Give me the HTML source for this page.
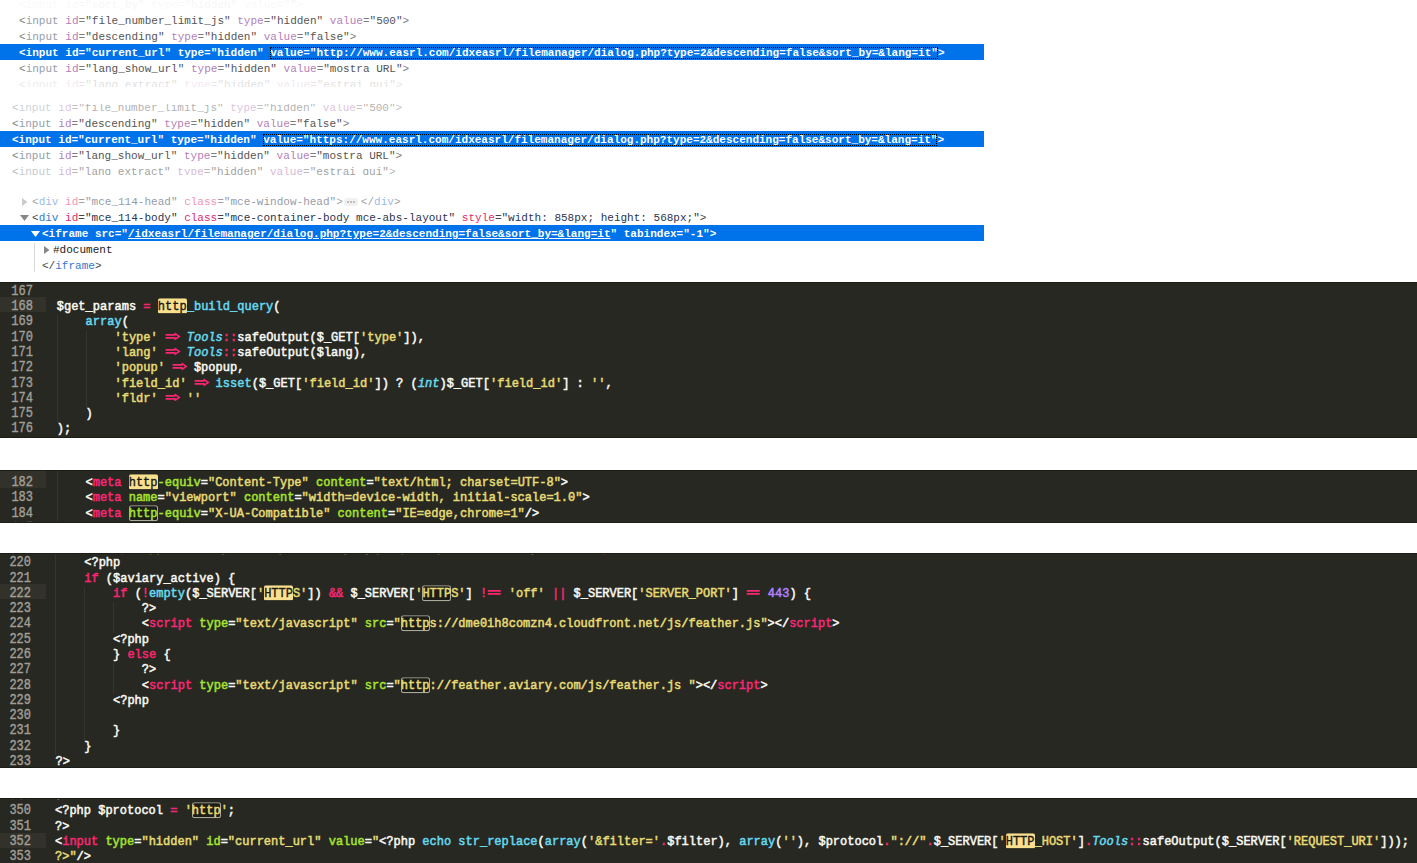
<!DOCTYPE html>
<html><head><meta charset="utf-8"><style>
*{margin:0;padding:0;box-sizing:border-box}
html,body{width:1417px;height:863px;overflow:hidden;background:#fff}
body{position:relative;font-family:"Liberation Mono",monospace}
.sb{position:absolute;left:0;width:1417px;background:#272822;overflow:hidden}
.sb::after{content:'';position:absolute;left:0;top:0;right:0;bottom:0;box-shadow:inset 0 1px 0 #1d1d18,inset 0 -1px 0 #1d1d18;pointer-events:none}
.ln{position:absolute;left:9px;width:24px;text-align:right;color:#a09f97;line-height:15.28px;height:15.28px;white-space:pre;transform:scaleY(1.16);transform-origin:0 11px;-webkit-text-stroke:0.35px #a09f97}
.cl{position:absolute;color:#f8f8f2;line-height:15.28px;height:15.28px;white-space:pre;transform:scaleY(1.06);transform-origin:0 11px;-webkit-text-stroke:0.5px currentColor}
.gh{position:absolute;left:0;width:46px;height:15px;background:#32322b}
.ig{position:absolute;width:1px;background:#34352e}
.p{color:#f92672}.y{color:#e6db74}.c{color:#66d9ef}.ci{color:#66d9ef;font-style:italic}.g{color:#a6e22e}.v{color:#ae81ff}
.hl{background:linear-gradient(#f9e08f,#f9e08f) 0 0/100% calc(100% - 1px) no-repeat;padding-top:1px;color:#1a1a14;border-radius:2px;-webkit-text-stroke:0.35px #1a1a14}
.ol{background:linear-gradient(#1d1d18,#1d1d18) 0 0/100% calc(100% - 1px) no-repeat;padding-top:1px;box-shadow:inset 0 0 0 1px #aaa99c;border-radius:2.5px}
.dt{position:absolute;left:0;width:1417px;overflow:hidden}
.dr{position:absolute;left:0;width:1417px;height:16px;line-height:18px;font-size:11.03px;white-space:pre;color:#555}
.sel{background:#0073ea;width:984px;color:#fff}
.sel span{color:#fff!important}
.ta{color:#93a0ab}.pa{color:#7c7c7c}.aa{color:#b47fb8}.va{color:#555}
.tc{color:#3478d0}.pc{color:#444}.ac{color:#dd2a6c}.vc{color:#2b3550}
.dot{outline:1px dotted #000;outline-offset:-1px}
.u{text-decoration:underline}
.arr{display:inline-block;vertical-align:top;overflow:visible}
</style></head>
<body>
<div class="dt" style="top:0px;height:87px">
<div class="dr " style="top:-4px;opacity:0.05"><span style="position:absolute;left:19px"><span class="pa">&lt;</span><span class="ta">input</span> <span class="aa">id</span><span class="pa">=</span><span class="va">&quot;sort_by&quot;</span> <span class="aa">type</span><span class="pa">=</span><span class="va">&quot;hidden&quot;</span> <span class="aa">value</span><span class="pa">=</span><span class="va">&quot;&quot;</span><span class="pa">&gt;</span></span></div>
<div class="dr " style="top:12px;opacity:1"><span style="position:absolute;left:19px"><span class="pa">&lt;</span><span class="ta">input</span> <span class="aa">id</span><span class="pa">=</span><span class="va">&quot;file_number_limit_js&quot;</span> <span class="aa">type</span><span class="pa">=</span><span class="va">&quot;hidden&quot;</span> <span class="aa">value</span><span class="pa">=</span><span class="va">&quot;500&quot;</span><span class="pa">&gt;</span></span></div>
<div class="dr " style="top:28px;opacity:1"><span style="position:absolute;left:19px"><span class="pa">&lt;</span><span class="ta">input</span> <span class="aa">id</span><span class="pa">=</span><span class="va">&quot;descending&quot;</span> <span class="aa">type</span><span class="pa">=</span><span class="va">&quot;hidden&quot;</span> <span class="aa">value</span><span class="pa">=</span><span class="va">&quot;false&quot;</span><span class="pa">&gt;</span></span></div>
<div class="dr sel" style="top:44px"><span style="position:absolute;left:19px;font-weight:bold">&lt;input id=&quot;current_url&quot; type=&quot;hidden&quot; <span class="dot">value=&quot;http://www.easrl.com/idxeasrl/filemanager/dialog.php?type=2&amp;descending=false&amp;sort_by=&amp;lang=it&quot;</span>&gt;</span></div>
<div class="dr " style="top:60px;opacity:1"><span style="position:absolute;left:19px"><span class="pa">&lt;</span><span class="ta">input</span> <span class="aa">id</span><span class="pa">=</span><span class="va">&quot;lang_show_url&quot;</span> <span class="aa">type</span><span class="pa">=</span><span class="va">&quot;hidden&quot;</span> <span class="aa">value</span><span class="pa">=</span><span class="va">&quot;mostra URL&quot;</span><span class="pa">&gt;</span></span></div>
<div class="dr " style="top:76px;opacity:0.18"><span style="position:absolute;left:19px"><span class="pa">&lt;</span><span class="ta">input</span> <span class="aa">id</span><span class="pa">=</span><span class="va">&quot;lang_extract&quot;</span> <span class="aa">type</span><span class="pa">=</span><span class="va">&quot;hidden&quot;</span> <span class="aa">value</span><span class="pa">=</span><span class="va">&quot;estrai qui&quot;</span><span class="pa">&gt;</span></span></div>
</div>
<div class="dt" style="top:103.5px;height:71.5px">
<div class="dr " style="top:-20.5px;opacity:0"><span style="position:absolute;left:12px"><span class="pa">&lt;</span><span class="ta">input</span> <span class="aa">id</span><span class="pa">=</span><span class="va">&quot;sort_by&quot;</span> <span class="aa">type</span><span class="pa">=</span><span class="va">&quot;hidden&quot;</span> <span class="aa">value</span><span class="pa">=</span><span class="va">&quot;&quot;</span><span class="pa">&gt;</span></span></div>
<div class="dr " style="top:-4.5px;opacity:0.45"><span style="position:absolute;left:12px"><span class="pa">&lt;</span><span class="ta">input</span> <span class="aa">id</span><span class="pa">=</span><span class="va">&quot;file_number_limit_js&quot;</span> <span class="aa">type</span><span class="pa">=</span><span class="va">&quot;hidden&quot;</span> <span class="aa">value</span><span class="pa">=</span><span class="va">&quot;500&quot;</span><span class="pa">&gt;</span></span></div>
<div class="dr " style="top:11.5px;opacity:1"><span style="position:absolute;left:12px"><span class="pa">&lt;</span><span class="ta">input</span> <span class="aa">id</span><span class="pa">=</span><span class="va">&quot;descending&quot;</span> <span class="aa">type</span><span class="pa">=</span><span class="va">&quot;hidden&quot;</span> <span class="aa">value</span><span class="pa">=</span><span class="va">&quot;false&quot;</span><span class="pa">&gt;</span></span></div>
<div class="dr sel" style="top:27.5px"><span style="position:absolute;left:12px;font-weight:bold">&lt;input id=&quot;current_url&quot; type=&quot;hidden&quot; <span class="dot">value=&quot;https://www.easrl.com/idxeasrl/filemanager/dialog.php?type=2&amp;descending=false&amp;sort_by=&amp;lang=it&quot;</span>&gt;</span></div>
<div class="dr " style="top:43.5px;opacity:1"><span style="position:absolute;left:12px"><span class="pa">&lt;</span><span class="ta">input</span> <span class="aa">id</span><span class="pa">=</span><span class="va">&quot;lang_show_url&quot;</span> <span class="aa">type</span><span class="pa">=</span><span class="va">&quot;hidden&quot;</span> <span class="aa">value</span><span class="pa">=</span><span class="va">&quot;mostra URL&quot;</span><span class="pa">&gt;</span></span></div>
<div class="dr " style="top:59.5px;opacity:0.55"><span style="position:absolute;left:12px"><span class="pa">&lt;</span><span class="ta">input</span> <span class="aa">id</span><span class="pa">=</span><span class="va">&quot;lang_extract&quot;</span> <span class="aa">type</span><span class="pa">=</span><span class="va">&quot;hidden&quot;</span> <span class="aa">value</span><span class="pa">=</span><span class="va">&quot;estrai qui&quot;</span><span class="pa">&gt;</span></span></div>
</div>
<div class="dt" style="top:185px;height:88px">
<div class="dr" style="top:8px;opacity:0.5"><svg style="position:absolute;left:22px;top:4.5px" width="5.5" height="8"><path d="M0 0L5.5 4L0 8Z" fill="#999"/></svg><span style="position:absolute;left:32px"><span class="pc">&lt;</span><span class="tc">div</span> <span class="ac">id</span><span class="pc">=</span><span class="vc">&quot;mce_114-head&quot;</span> <span class="ac">class</span><span class="pc">=</span><span class="vc">&quot;mce-window-head&quot;</span><span class="pc">&gt;</span><svg style="display:inline-block;vertical-align:-1px;margin:0 3px 0 1px" width="14" height="8"><rect x="0" y="0" width="14" height="8" rx="3" fill="#e4e4e4"/><circle cx="4" cy="4" r="1.1" fill="#666"/><circle cx="7" cy="4" r="1.1" fill="#666"/><circle cx="10" cy="4" r="1.1" fill="#666"/></svg><span class="pc">&lt;/</span><span class="tc">div</span><span class="pc">&gt;</span></span></div>
<div class="dr" style="top:24px"><svg style="position:absolute;left:20px;top:6px" width="9" height="6"><path d="M0 0L9 0L4.5 6Z" fill="#888"/></svg><span style="position:absolute;left:32px"><span class="pc">&lt;</span><span class="tc">div</span> <span class="ac">id</span><span class="pc">=</span><span class="vc">&quot;mce_114-body&quot;</span> <span class="ac">class</span><span class="pc">=</span><span class="vc">&quot;mce-container-body mce-abs-layout&quot;</span> <span class="ac">style</span><span class="pc">=</span><span class="vc">&quot;width: 858px; height: 568px;&quot;</span><span class="pc">&gt;</span></span></div>
<div class="dr sel" style="top:40px"><svg style="position:absolute;left:31px;top:6px" width="9" height="6"><path d="M0 0L9 0L4.5 6Z" fill="#fff"/></svg><span style="position:absolute;left:42px;font-weight:bold">&lt;iframe src=&quot;<span class="u">/idxeasrl/filemanager/dialog.php?type=2&amp;descending=false&amp;sort_by=&amp;lang=it</span>&quot; tabindex=&quot;-1&quot;&gt;</span></div>
<div class="dr" style="top:56px"><svg style="position:absolute;left:44px;top:4.5px" width="5.5" height="8"><path d="M0 0L5.5 4L0 8Z" fill="#888"/></svg><span style="position:absolute;left:53px;color:#222">#document</span></div>
<div class="dr" style="top:72px"><span style="position:absolute;left:42px"><span class="pc">&lt;/</span><span class="tc">iframe</span><span class="pc">&gt;</span></span></div>
<div style="position:absolute;left:34px;top:58px;width:1px;height:29px;background:#d8d8d8"></div>
</div>
<div class="sb" style="top:282px;height:156px;font-size:12.04px">
<div class="gh" style="top:15.18px;height:15px"></div>
<div class="ig" style="left:57.30px;top:33.46px;height:106.96px"></div>
<div class="ig" style="left:86.20px;top:48.74px;height:76.40px"></div>
<div class="ln" style="top:2.90px;left:9px">167</div>
<div class="cl" style="top:2.90px;left:56.7px"></div>
<div class="ln" style="top:18.18px;left:9px">168</div>
<div class="cl" style="top:18.18px;left:56.7px">$get_params <span class="p">=</span> <span class="hl">http</span><span class="c">_build_query</span>(</div>
<div class="ln" style="top:33.46px;left:9px">169</div>
<div class="cl" style="top:33.46px;left:56.7px">    <span class="c">array</span>(</div>
<div class="ln" style="top:48.74px;left:9px">170</div>
<div class="cl" style="top:48.74px;left:56.7px">        <span class="y">&#x27;type&#x27;</span> <svg class="arr" width="14.45" height="15" viewBox="0 0 14.45 15"><path d="M0.6 4.3H10.6M0.6 7.1H10.6M9.6 2.7L14.3 5.7L9.6 8.7" fill="none" stroke="#f92672" stroke-width="1.5"/></svg> <span class="ci">Tools</span><span class="p">::</span>safeOutput($_GET[<span class="y">&#x27;type&#x27;</span>]),</div>
<div class="ln" style="top:64.02px;left:9px">171</div>
<div class="cl" style="top:64.02px;left:56.7px">        <span class="y">&#x27;lang&#x27;</span> <svg class="arr" width="14.45" height="15" viewBox="0 0 14.45 15"><path d="M0.6 4.3H10.6M0.6 7.1H10.6M9.6 2.7L14.3 5.7L9.6 8.7" fill="none" stroke="#f92672" stroke-width="1.5"/></svg> <span class="ci">Tools</span><span class="p">::</span>safeOutput($lang),</div>
<div class="ln" style="top:79.30px;left:9px">172</div>
<div class="cl" style="top:79.30px;left:56.7px">        <span class="y">&#x27;popup&#x27;</span> <svg class="arr" width="14.45" height="15" viewBox="0 0 14.45 15"><path d="M0.6 4.3H10.6M0.6 7.1H10.6M9.6 2.7L14.3 5.7L9.6 8.7" fill="none" stroke="#f92672" stroke-width="1.5"/></svg> $popup,</div>
<div class="ln" style="top:94.58px;left:9px">173</div>
<div class="cl" style="top:94.58px;left:56.7px">        <span class="y">&#x27;field_id&#x27;</span> <svg class="arr" width="14.45" height="15" viewBox="0 0 14.45 15"><path d="M0.6 4.3H10.6M0.6 7.1H10.6M9.6 2.7L14.3 5.7L9.6 8.7" fill="none" stroke="#f92672" stroke-width="1.5"/></svg> <span class="c">isset</span>($_GET[<span class="y">&#x27;field_id&#x27;</span>]) ? (<span class="ci">int</span>)$_GET[<span class="y">&#x27;field_id&#x27;</span>] : <span class="y">&#x27;&#x27;</span>,</div>
<div class="ln" style="top:109.86px;left:9px">174</div>
<div class="cl" style="top:109.86px;left:56.7px">        <span class="y">&#x27;fldr&#x27;</span> <svg class="arr" width="14.45" height="15" viewBox="0 0 14.45 15"><path d="M0.6 4.3H10.6M0.6 7.1H10.6M9.6 2.7L14.3 5.7L9.6 8.7" fill="none" stroke="#f92672" stroke-width="1.5"/></svg> <span class="y">&#x27;&#x27;</span></div>
<div class="ln" style="top:125.14px;left:9px">175</div>
<div class="cl" style="top:125.14px;left:56.7px">    )</div>
<div class="ln" style="top:140.42px;left:9px">176</div>
<div class="cl" style="top:140.42px;left:56.7px">);</div>
<div class="ln" style="top:155.70px;left:9px">177</div>
<div class="cl" style="top:155.70px;left:56.7px">?&gt;</div>
</div>
<div class="sb" style="top:470px;height:52.5px;font-size:12.017px">
<div class="gh" style="top:1.00px;height:17px"></div>
<div class="ig" style="left:57.30px;top:-9.28px;height:76.40px"></div>
<div class="ln" style="top:-9.28px;left:9px"></div>
<div class="cl" style="top:-9.28px;left:56.7px"></div>
<div class="ln" style="top:6.00px;left:9px">182</div>
<div class="cl" style="top:6.00px;left:56.7px">    &lt;<span class="p">meta</span> <span class="hl">http</span><span class="g">-equiv</span>=<span class="y">&quot;Content-Type&quot;</span> <span class="g">content</span>=<span class="y">&quot;text/html; charset=UTF-8&quot;</span>&gt;</div>
<div class="ln" style="top:21.28px;left:9px">183</div>
<div class="cl" style="top:21.28px;left:56.7px">    &lt;<span class="p">meta</span> <span class="g">name</span>=<span class="y">&quot;viewport&quot;</span> <span class="g">content</span>=<span class="y">&quot;width=device-width, initial-scale=1.0&quot;</span>&gt;</div>
<div class="ln" style="top:36.56px;left:9px">184</div>
<div class="cl" style="top:36.56px;left:56.7px">    &lt;<span class="p">meta</span> <span class="ol g">http</span><span class="g">-equiv</span>=<span class="y">&quot;X-UA-Compatible&quot;</span> <span class="g">content</span>=<span class="y">&quot;IE=edge,chrome=1&quot;</span>/&gt;</div>
<div class="ln" style="top:51.84px;left:9px">185</div>
<div class="cl" style="top:51.84px;left:56.7px">    &lt;<span class="p">meta</span> <span class="g">name</span>=<span class="y">&quot;robots&quot;</span> <span class="g">content</span>=<span class="y">&quot;noindex,nofollow&quot;</span>&gt;</div>
</div>
<div class="sb" style="top:553px;height:215px;font-size:11.99px">
<div class="gh" style="top:31.36px;height:15px"></div>
<div class="ig" style="left:55.30px;top:-11.98px;height:213.92px"></div>
<div class="ig" style="left:84.20px;top:33.86px;height:152.80px"></div>
<div class="ig" style="left:113.10px;top:49.14px;height:30.56px"></div>
<div class="ig" style="left:113.10px;top:110.26px;height:30.56px"></div>
<div class="ln" style="top:-11.98px;left:7px">219</div>
<div class="cl" style="top:-11.98px;left:55.5px">    &lt;<span class="p">script</span> <span class="g">type</span>=<span class="y">&quot;text/javascript&quot;</span> <span class="g">src</span>=<span class="y">&quot;js/jquery.ui.position.min.js&quot;</span>&gt;&lt;/<span class="p">script</span>&gt;</div>
<div class="ln" style="top:3.30px;left:7px">220</div>
<div class="cl" style="top:3.30px;left:55.5px">    &lt;?php</div>
<div class="ln" style="top:18.58px;left:7px">221</div>
<div class="cl" style="top:18.58px;left:55.5px">    <span class="p">if</span> ($aviary_active) {</div>
<div class="ln" style="top:33.86px;left:7px">222</div>
<div class="cl" style="top:33.86px;left:55.5px">        <span class="p">if</span> (<span class="p">!</span><span class="c">empty</span>($_SERVER[<span class="y">&#x27;</span><span class="hl">HTTP</span><span class="y">S&#x27;</span>]) <span class="p">&amp;&amp;</span> $_SERVER[<span class="y">&#x27;</span><span class="ol y">HTTP</span><span class="y">S&#x27;</span>] <span class="p">!</span><svg class="arr" width="14.45" height="15" viewBox="0 0 14.45 15"><path d="M0.8 4.3H13.8M0.8 7.1H13.8" fill="none" stroke="#f92672" stroke-width="1.6"/></svg> <span class="y">&#x27;off&#x27;</span> <span class="p">||</span> $_SERVER[<span class="y">&#x27;SERVER_PORT&#x27;</span>] <svg class="arr" width="14.45" height="15" viewBox="0 0 14.45 15"><path d="M0.8 4.3H13.8M0.8 7.1H13.8" fill="none" stroke="#f92672" stroke-width="1.6"/></svg> <span class="v">443</span>) {</div>
<div class="ln" style="top:49.14px;left:7px">223</div>
<div class="cl" style="top:49.14px;left:55.5px">            ?&gt;</div>
<div class="ln" style="top:64.42px;left:7px">224</div>
<div class="cl" style="top:64.42px;left:55.5px">            &lt;<span class="p">script</span> <span class="g">type</span>=<span class="y">&quot;text/javascript&quot;</span> <span class="g">src</span>=<span class="y">&quot;</span><span class="ol y">http</span><span class="y">s://dme0ih8comzn4.cloudfront.net/js/feather.js&quot;</span>&gt;&lt;/<span class="p">script</span>&gt;</div>
<div class="ln" style="top:79.70px;left:7px">225</div>
<div class="cl" style="top:79.70px;left:55.5px">        &lt;?php</div>
<div class="ln" style="top:94.98px;left:7px">226</div>
<div class="cl" style="top:94.98px;left:55.5px">        } <span class="p">else</span> {</div>
<div class="ln" style="top:110.26px;left:7px">227</div>
<div class="cl" style="top:110.26px;left:55.5px">            ?&gt;</div>
<div class="ln" style="top:125.54px;left:7px">228</div>
<div class="cl" style="top:125.54px;left:55.5px">            &lt;<span class="p">script</span> <span class="g">type</span>=<span class="y">&quot;text/javascript&quot;</span> <span class="g">src</span>=<span class="y">&quot;</span><span class="ol y">http</span><span class="y">://feather.aviary.com/js/feather.js &quot;</span>&gt;&lt;/<span class="p">script</span>&gt;</div>
<div class="ln" style="top:140.82px;left:7px">229</div>
<div class="cl" style="top:140.82px;left:55.5px">        &lt;?php</div>
<div class="ln" style="top:156.10px;left:7px">230</div>
<div class="cl" style="top:156.10px;left:55.5px"></div>
<div class="ln" style="top:171.38px;left:7px">231</div>
<div class="cl" style="top:171.38px;left:55.5px">        }</div>
<div class="ln" style="top:186.66px;left:7px">232</div>
<div class="cl" style="top:186.66px;left:55.5px">    }</div>
<div class="ln" style="top:201.94px;left:7px">233</div>
<div class="cl" style="top:201.94px;left:55.5px">?&gt;</div>
<div class="ln" style="top:217.22px;left:7px">234</div>
<div class="cl" style="top:217.22px;left:55.5px"></div>
</div>
<div class="sb" style="top:798px;height:72px;font-size:12.013px">
<div class="gh" style="top:34.66px;height:15.5px"></div>
<div class="ln" style="top:-8.98px;left:7px">349</div>
<div class="cl" style="top:-8.98px;left:55.0px">?&gt;</div>
<div class="ln" style="top:6.30px;left:7px">350</div>
<div class="cl" style="top:6.30px;left:55.0px">&lt;?php $protocol <span class="p">=</span> <span class="y">&#x27;</span><span class="ol y">http</span><span class="y">&#x27;</span>;</div>
<div class="ln" style="top:21.58px;left:7px">351</div>
<div class="cl" style="top:21.58px;left:55.0px">?&gt;</div>
<div class="ln" style="top:36.86px;left:7px">352</div>
<div class="cl" style="top:36.86px;left:55.0px">&lt;<span class="p">input</span> <span class="g">type</span>=<span class="y">&quot;hidden&quot;</span> <span class="g">id</span>=<span class="y">&quot;current_url&quot;</span> <span class="g">value</span>=<span class="y">&quot;</span>&lt;?php <span class="c">echo</span> <span class="c">str_replace</span>(<span class="c">array</span>(<span class="y">&#x27;&amp;filter=&#x27;</span><span class="p">.</span>$filter), <span class="c">array</span>(<span class="y">&#x27;&#x27;</span>), $protocol<span class="p">.</span><span class="y">&quot;://&quot;</span><span class="p">.</span>$_SERVER[<span class="y">&#x27;</span><span class="hl">HTTP</span><span class="y">_HOST&#x27;</span>]<span class="p">.</span><span class="ci">Tools</span><span class="p">::</span>safeOutput($_SERVER[<span class="y">&#x27;REQUEST_URI&#x27;</span>]));</div>
<div class="ln" style="top:52.14px;left:7px">353</div>
<div class="cl" style="top:52.14px;left:55.0px"><span class="y">?&gt;&quot;</span>/&gt;</div>
</div>
</body></html>
